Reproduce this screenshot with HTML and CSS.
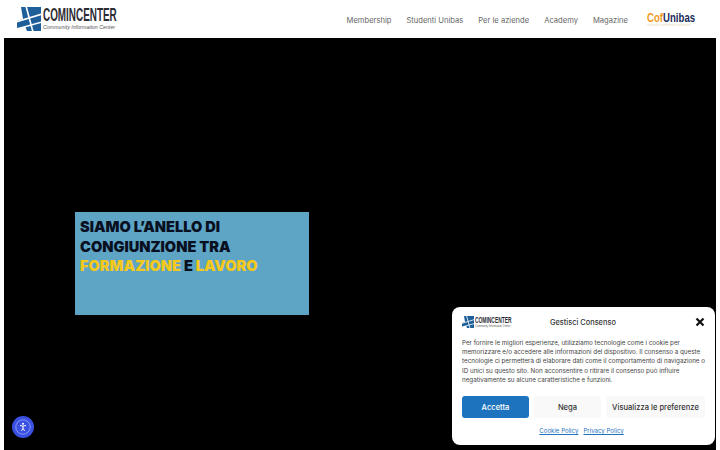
FILE: index.html
```html
<!doctype html>
<html>
  <head>
    <title>Comincenter</title>
    <meta name="viewport" content="width=device-width, initial-scale=1.0"/>
    <link rel="stylesheet" href="styles.css">
  </head>
  <body>

    <div id="header">
      <div class="logo">
        <svg class="logo-mark" viewBox="0 0 24 24">
          <polygon points="4,0 24,0 24,24 10,24 8,19 0,21 0,14 6,12" fill="#1f5f99"/>
          <path d="M9 -1 L16 25 M-1 15 L25 7 M7 20 L25 15" stroke="#fff" stroke-width="1.6" fill="none"/>
        </svg>
        <div class="logo-text">
          <div class="logo-name">COMINCENTER</div>
          <div class="logo-sub">Community Information Center</div>
        </div>
      </div>
      <div class="nav">
        <a>Membership</a>
        <a>Studenti Unibas</a>
        <a>Per le aziende</a>
        <a>Academy</a>
        <a>Magazine</a>
      </div>
      <div class="cof">
        <div class="cof-name"><span class="cof-orange">Cof</span>Unibas</div>
        <div class="cof-sub">Consorzio Orientamento Formazione</div>
      </div>
    </div>

    <div id="hero">
      <div class="banner">
        <div>SIAMO L&rsquo;ANELLO DI</div>
        <div>CONGIUNZIONE TRA</div>
        <div><span class="yellow">FORMAZIONE</span> E <span class="yellow">LAVORO</span></div>
      </div>
    </div>

    <div id="access">
      <svg viewBox="0 0 16 16" class="access-icon">
        <circle cx="8" cy="8" r="7.2" fill="none" stroke="#a9b4ff" stroke-width=".7"/>
        <circle cx="8" cy="4.8" r="1" fill="#fff"/>
        <path d="M5 6.5 L8 7.1 L11 6.5 M8 7.1 V9.2 M8 9.2 L6.5 11.8 M8 9.2 L9.5 11.8" fill="none" stroke="#fff" stroke-width="1"/>
      </svg>
    </div>

    <div id="consent">
      <div class="consent-head">
        <div class="logo logo-small">
          <svg class="logo-mark" viewBox="0 0 24 24">
            <polygon points="4,0 24,0 24,24 10,24 8,19 0,21 0,14 6,12" fill="#1f5f99"/>
            <path d="M9 -1 L16 25 M-1 15 L25 7 M7 20 L25 15" stroke="#fff" stroke-width="1.6" fill="none"/>
          </svg>
          <div class="logo-text">
            <div class="logo-name">COMINCENTER</div>
            <div class="logo-sub">Community Information Center</div>
          </div>
        </div>
        <div class="consent-title">Gestisci Consenso</div>
        <svg class="close" viewBox="0 0 10 10">
          <path d="M1.5 1.5 L8.5 8.5 M8.5 1.5 L1.5 8.5" stroke="#111" stroke-width="2.2" fill="none"/>
        </svg>
      </div>
      <div class="consent-text">Per fornire le migliori esperienze, utilizziamo tecnologie come i cookie per memorizzare e/o accedere alle informazioni del dispositivo. Il consenso a queste tecnologie ci permetterà di elaborare dati come il comportamento di navigazione o ID unici su questo sito. Non acconsentire o ritirare il consenso può influire negativamente su alcune caratteristiche e funzioni.</div>
      <div class="consent-buttons">
        <div class="btn btn-accept">Accetta</div>
        <div class="btn btn-deny">Nega</div>
        <div class="btn btn-prefs">Visualizza le preferenze</div>
      </div>
      <div class="consent-links">
        <a>Cookie Policy</a>
        <a>Privacy Policy</a>
      </div>
    </div>

  </body>
</html>
```

FILE: styles.css
```css
html {
  box-sizing: border-box;
}
*, *:before, *:after {
  box-sizing: inherit;
}

html, body {
  width: 100%;
  height: 100%;
  margin: 0;
  padding: 0;
  overflow: hidden;
  background-color: #fff;
  font-family: "Inter", "Liberation Sans", sans-serif;
}

body {
  display: flex;
  flex-direction: column;
  padding: 0 4px;
}

#header {
  height: 38px;
  display: flex;
  align-items: center;
  padding: 0 21px 0 13px;
  flex-shrink: 0;
}

.logo {
  display: flex;
  align-items: center;
  gap: 2px;
}

.logo-mark {
  width: 24px;
  height: 24px;
  display: block;
  flex-shrink: 0;
}

.logo-text {
  width: 74px;
}

.logo-name {
  font-family: "Liberation Sans", sans-serif;
  font-weight: 700;
  font-size: 18px;
  line-height: 16px;
  color: #2b2b33;
  white-space: nowrap;
  transform: scaleX(0.55);
  transform-origin: left;
}

.logo-sub {
  font-family: "Liberation Sans", sans-serif;
  font-style: italic;
  font-size: 5.3px;
  line-height: 8px;
  color: #555;
  white-space: nowrap;
}

.nav {
  margin-left: auto;
  display: flex;
  gap: 15px;
  padding-top: 2px;
}

.nav a {
  font-size: 7.6px;
  color: #666;
}

.cof {
  margin-left: 19px;
  width: 48px;
}

.cof-name {
  font-family: "Liberation Sans", sans-serif;
  font-weight: 700;
  font-size: 13px;
  line-height: 13px;
  color: #1c2b5a;
  white-space: nowrap;
  transform: scaleX(0.74);
  transform-origin: left;
}

.cof-orange {
  color: #ef9a1d;
}

.cof-sub {
  font-size: 2.5px;
  line-height: 4px;
  color: #e6d9b8;
  white-space: nowrap;
}

#hero {
  flex: 1;
  background-color: #000;
  padding: 174px 0 0 71px;
}

.banner {
  width: 234px;
  height: 103px;
  background-color: #5ea4c5;
  padding: 6px 5px;
  font-weight: 900;
  font-size: 14.6px;
  line-height: 19.5px;
  color: #08101f;
}

.yellow {
  color: #f5c91c;
}

#access {
  position: fixed;
  left: 12px;
  top: 416px;
  width: 22px;
  height: 22px;
  border-radius: 50%;
  background-color: #3a50e0;
  padding: 3px;
}

.access-icon {
  width: 16px;
  height: 16px;
  display: block;
}

#consent {
  position: fixed;
  left: 452px;
  top: 307px;
  width: 263px;
  height: 138px;
  background-color: #fff;
  border-radius: 8px;
  padding: 0 10px;
}

.consent-head {
  height: 28px;
  display: flex;
  align-items: center;
  margin-top: 1px;
}

.logo-small {
  gap: 1px;
  width: 88px;
}

.logo-small .logo-mark {
  width: 12px;
  height: 12px;
}

.logo-small .logo-text {
  width: 36px;
}

.logo-small .logo-name {
  font-size: 9px;
  line-height: 9px;
  transform: scaleX(0.545);
}

.logo-small .logo-sub {
  font-size: 2.6px;
  line-height: 4px;
}

.consent-title {
  font-size: 7.4px;
  font-weight: 500;
  color: #333;
}

.close {
  width: 10px;
  height: 10px;
  margin-left: auto;
}

.consent-text {
  margin-top: 3px;
  font-size: 6.25px;
  line-height: 9.2px;
  color: #444;
  height: 51px;
}

.consent-buttons {
  margin-top: 6px;
  display: flex;
  gap: 5px;
}

.btn {
  height: 22px;
  border-radius: 3px;
  display: flex;
  align-items: center;
  justify-content: center;
  font-size: 7.6px;
  font-weight: 500;
  color: #333;
  background-color: #f9f9f9;
}

.btn-accept {
  width: 67px;
  background-color: #1e73be;
  color: #fff;
}

.btn-deny {
  width: 67px;
}

.btn-prefs {
  width: 99px;
  white-space: nowrap;
}

.consent-links {
  margin-top: 9px;
  padding-right: 4px;
  display: flex;
  justify-content: center;
  gap: 5px;
}

.consent-links a {
  font-size: 6.1px;
  color: #1e73be;
  text-decoration: underline;
}
```
